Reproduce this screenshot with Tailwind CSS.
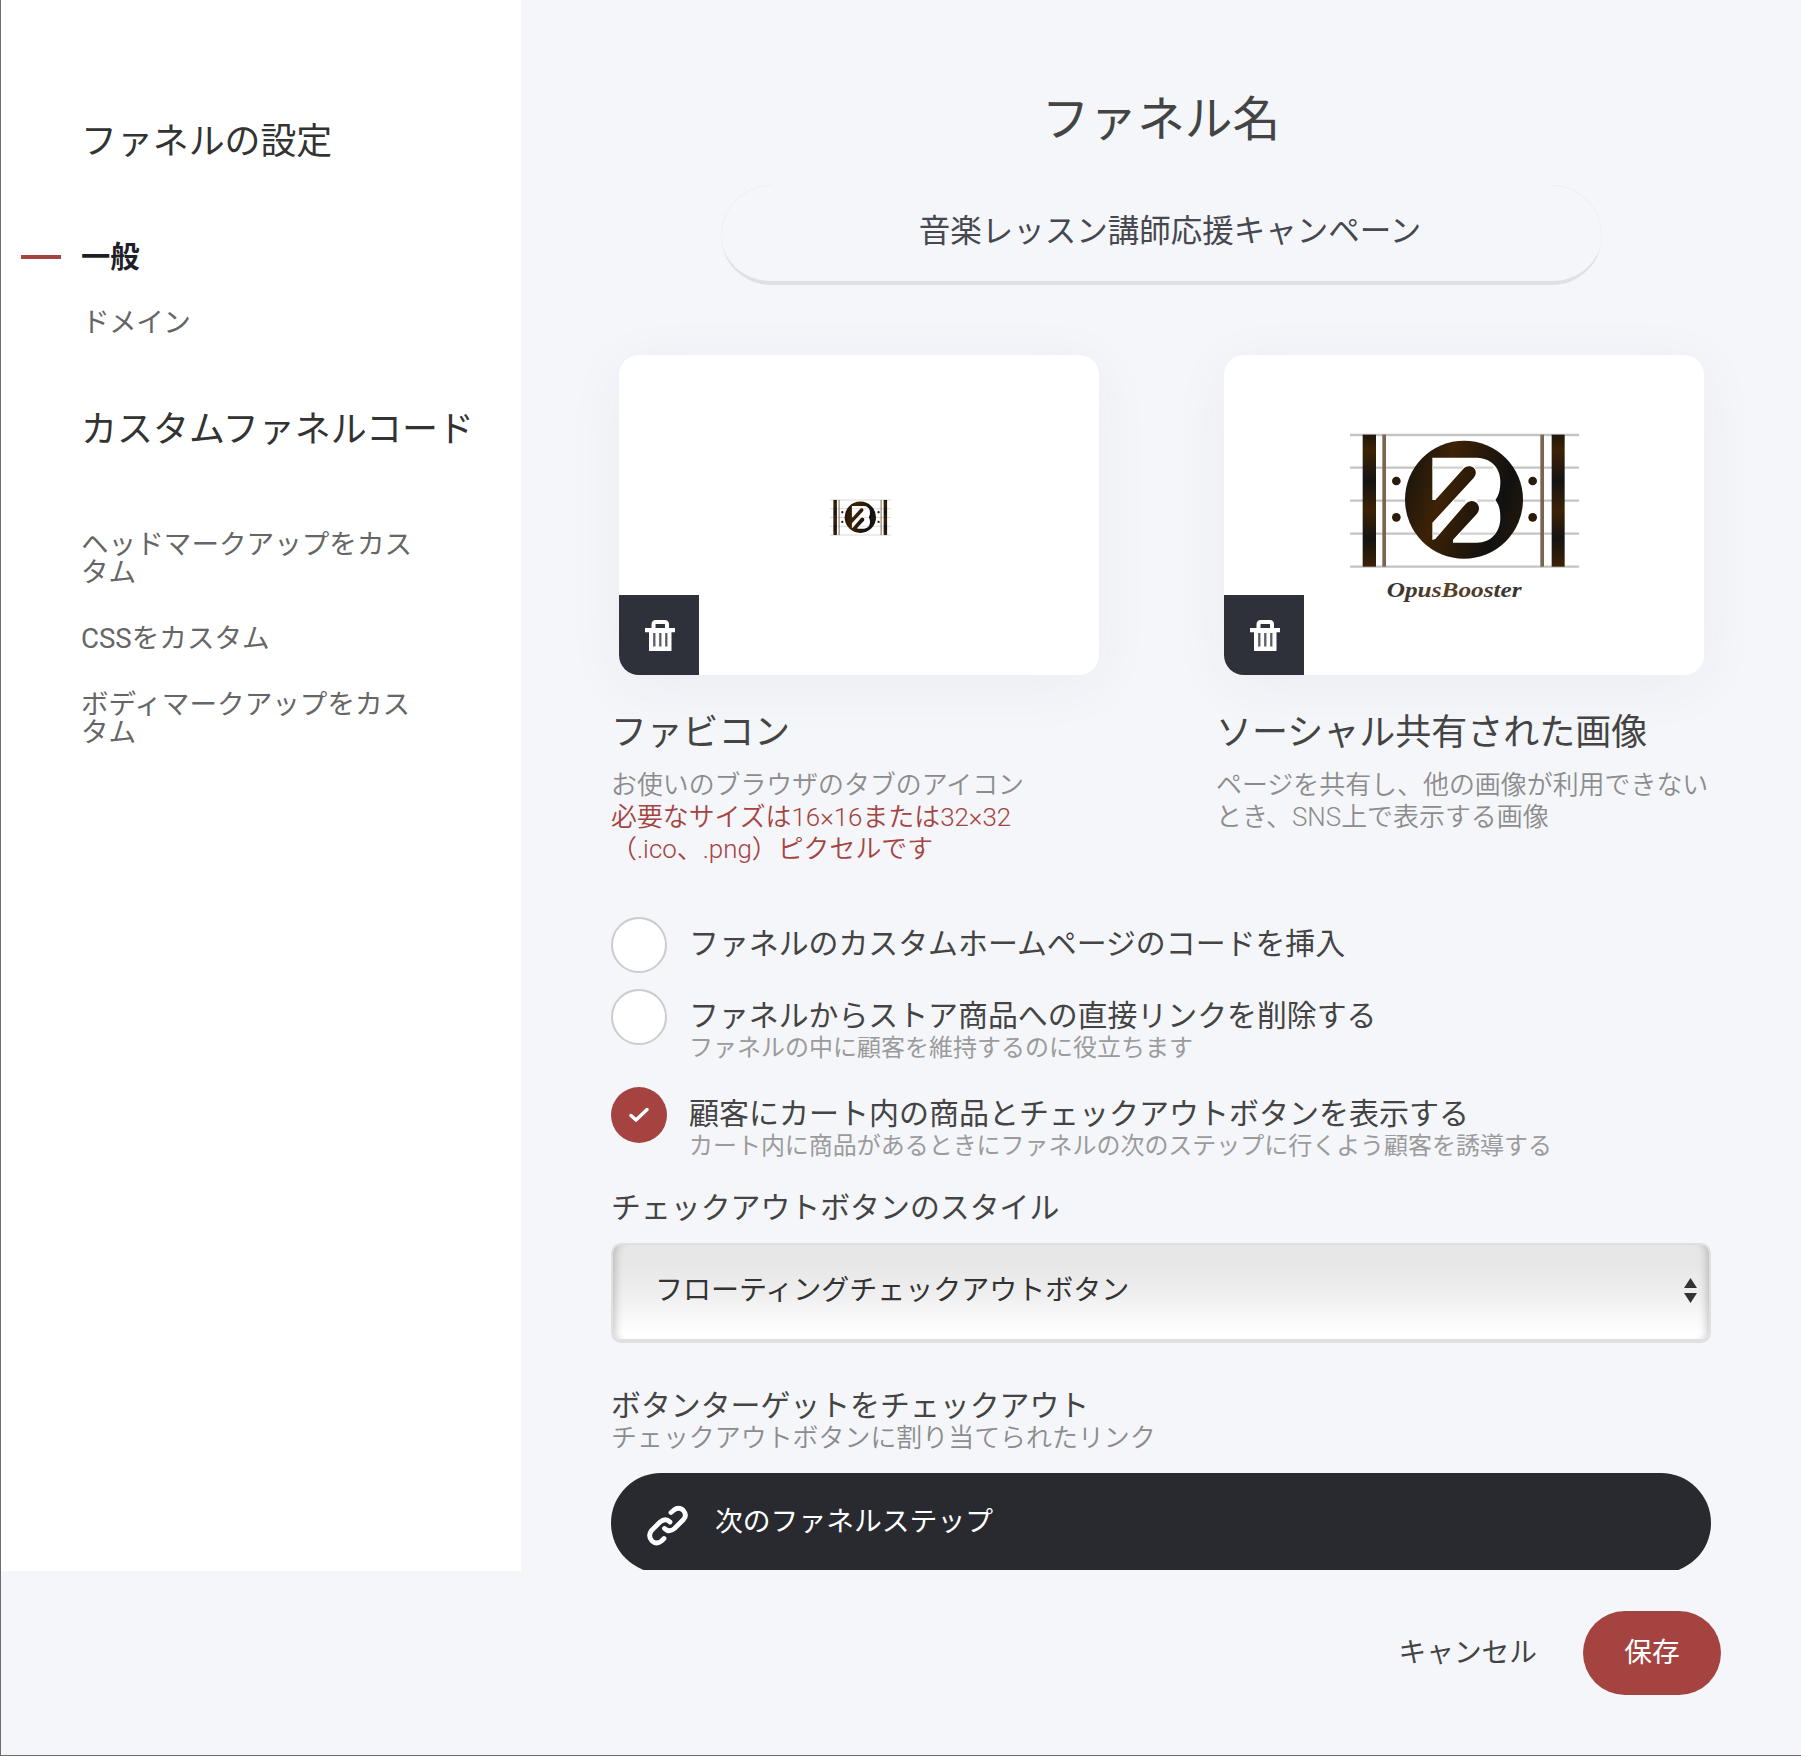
<!DOCTYPE html>
<html lang="ja">
<head>
<meta charset="utf-8">
<title>ファネルの設定</title>
<script src="https://cdn.jsdelivr.net/npm/@tailwindcss/browser@4"></script>
</head>
<body class="bg-[#f4f6fa]">
<svg class="absolute size-0" aria-hidden="true">
  <defs>
    <linearGradient id="bar" x1="0" y1="0" x2="0" y2="1">
      <stop offset="0" stop-color="#20170c"/><stop offset=".12" stop-color="#3d2205"/><stop offset=".35" stop-color="#141414"/><stop offset=".57" stop-color="#3d2205"/><stop offset=".79" stop-color="#141414"/><stop offset="1" stop-color="#3d2205"/>
    </linearGradient>
    <linearGradient id="disc" x1="0" y1=".35" x2="1" y2=".65">
      <stop offset="0" stop-color="#1c160e"/><stop offset=".3" stop-color="#3d2205"/><stop offset=".5" stop-color="#2c1b09"/><stop offset=".8" stop-color="#111"/><stop offset="1" stop-color="#20170c"/>
    </linearGradient>
    <linearGradient id="word" x1="0" y1="0" x2="1" y2="0">
      <stop offset="0" stop-color="#333"/><stop offset=".45" stop-color="#5a4024"/><stop offset="1" stop-color="#333"/>
    </linearGradient>
    <symbol id="emblem" viewBox="60 68 688 410">
      <path d="M60 76H748M60 174H748M60 273H748M60 372H748M60 471H748" stroke="#c4c4c4" stroke-width="7" fill="none"/>
      <g fill="url(#bar)">
        <rect x="98" y="75" width="40" height="396"/><rect x="665" y="75" width="39" height="396"/>
      </g>
      <g fill="#7b6450"><rect x="157" y="75" width="11" height="396"/><rect x="631" y="75" width="11" height="396"/></g>
      <g fill="#2b1b0b"><circle cx="199" cy="214" r="13"/><circle cx="199" cy="323" r="13"/><circle cx="608" cy="214" r="13"/><circle cx="608" cy="323" r="13"/></g>
      <circle cx="402" cy="270" r="177" fill="url(#disc)"/>
      <path d="M307 144H440C490 146 511 180 511 215C511 240 507 258 496 271C507 284 511 300 511 325C511 365 485 399 440 399H369V390L441 312C456 292 440 273 424 274C416 275 412 278 405 285L316 388L307 391V339L430 206C447 186 432 168 415 170C407 171 403 174 397 181L316 271H307Z" fill="#fff"/>
      <path d="M372 273H406M442 273H494M307 174H398M434 174H490M309 372H327M390 372H495" stroke="#d2d2d2" stroke-width="7"/>
    </symbol>
    <symbol id="trash" viewBox="0 0 30 31">
      <path d="M8.500 8V4.500Q8.500 2 11 2H19.500Q22 2 22 4.500V8" fill="none" stroke="#fff" stroke-width="4"/>
      <path d="M0 8H30V12.300H26.500V31H4V12.300H0Z" fill="#fff"/>
      <path d="M9.300 13V26.500M15.300 13V26.500M21.300 13V26.500" stroke="#5b5d65" stroke-width="2.300"/>
    </symbol>
  </defs>
</svg>
<div class="relative flex h-[1756px] w-[1801px] flex-col overflow-hidden border-b border-l border-b-[#6b6c70] border-l-[#6b6c70] bg-[#f4f6fa] font-[Roboto,'Noto_Sans_CJK_JP',sans-serif] whitespace-nowrap text-[#444]">
  <div class="flex h-[1571px]">
    <aside class="w-[520px] bg-white pt-[122px] pl-[80px] text-[27.600px] leading-[28px] text-[#666]">
      <h2 class="text-[35.900px] leading-[40px] text-[#333]">ファネルの設定</h2>
      <nav class="mt-[81px] flex flex-col">
        <a class="-ml-[60px] flex items-center gap-[20px] font-bold text-[#1f1f29]"><span class="h-1 w-10 bg-[#a54341]"></span><span class="text-[29.300px]">一般</span></a>
        <a class="mt-[38px] ml-px tracking-[-0.5px]">ドメイン</a>
      </nav>
      <h2 class="mt-[73px] text-[36px] leading-[40px] text-[#333]">カスタムファネルコード</h2>
      <nav class="mt-[81px] flex flex-col gap-[38px]">
        <a>ヘッドマークアップをカス<br>タム</a>
        <a>CSSをカスタム</a>
        <a>ボディマークアップをカス<br>タム</a>
      </nav>
    </aside>
    <main class="h-[1570px] w-[1280px] overflow-hidden px-[90px] pt-[90px]">
      <h1 class="text-center text-[47.700px] leading-[60px]">ファネル名</h1>
      <div class="relative mx-auto mt-[35px] flex h-[100px] w-[881px] items-center justify-center rounded-[50px] border-b-4 border-[#e0e0e0] pb-[2px] pl-[18px] text-[31.500px] text-[#47484f]">
        <span class="absolute top-0 left-0 size-[50px] rounded-tl-[50px] border-t border-l border-[#edeff2]"></span>
        <span class="absolute top-0 right-0 size-[50px] rounded-tr-[50px] border-t border-r border-[#edeff2]"></span>
        音楽レッスン講師応援キャンペーン
      </div>
      <section class="mt-[70px] flex">
        <div class="w-[605px] shrink-0">
          <div class="ml-2 flex h-[320px] w-[480px] items-end overflow-hidden rounded-[20px] bg-white shadow-[0_10px_60px_rgba(60,60,70,0.05)]">
            <button class="flex size-20 items-center justify-center bg-[#2f313a]"><svg class="h-[31px] w-[30px] translate-x-px"><use href="#trash"/></svg></button>
            <svg class="mb-[139px] ml-[131px] h-[37px] w-[61px]"><use href="#emblem"/></svg>
          </div>
          <h3 class="mt-[38px] text-[35.800px] leading-[40px]">ファビコン</h3>
          <p class="mt-[16px] h-24 text-[25.900px] leading-8 font-[350] text-[#8c8c8c]">お使いのブラウザのタブのアイコン<br><span class="text-[#a54341]">必要なサイズは16×16または32×32<br>（.ico、.png）ピクセルです</span></p>
        </div>
        <div class="w-[495px] shrink-0">
          <div class="ml-2 flex h-[320px] w-[480px] items-end overflow-hidden rounded-[20px] bg-white shadow-[0_10px_60px_rgba(60,60,70,0.05)]">
            <button class="flex size-20 items-center justify-center bg-[#2f313a]"><svg class="h-[31px] w-[30px] translate-x-px"><use href="#trash"/></svg></button>
            <svg class="mb-[59px] ml-[46px] h-[187px] w-[230px]" viewBox="60 58 690 561">
              <use href="#emblem" x="60" y="68" width="688" height="410"/>
              <text x="170" y="562" textLength="405" lengthAdjust="spacingAndGlyphs" font-family="'Liberation Serif',serif" font-style="italic" font-weight="bold" font-size="66" fill="url(#word)">OpusBooster</text>
            </svg>
          </div>
          <h3 class="mt-[38px] text-[36px] leading-[40px]">ソーシャル共有された画像</h3>
          <p class="mt-[16px] h-24 text-[25.950px] leading-8 font-[350] text-[#8c8c8c]">ページを共有し、他の画像が利用できない<br>とき、SNS上で表示する画像</p>
        </div>
      </section>
      <section class="mt-[52px] text-[29.900px] leading-8">
        <div class="flex h-[72px] gap-[22px]">
          <span class="size-14 rounded-full border-2 border-[#ccc] bg-white"></span>
          <p class="pt-[11px]">ファネルのカスタムホームページのコードを挿入</p>
        </div>
        <div class="flex h-[98px] gap-[22px]">
          <span class="size-14 rounded-full border-2 border-[#ccc] bg-white"></span>
          <div class="pt-[11px]"><p>ファネルからストア商品への直接リンクを削除する</p><p class="text-[24px] text-[#9b9b9b]">ファネルの中に顧客を維持するのに役立ちます</p></div>
        </div>
        <div class="flex h-[105px] gap-[22px]">
          <span class="flex size-14 items-center justify-center rounded-full bg-[#a54341]"><svg class="h-4 w-5" viewBox="0 0 20 16" fill="none" stroke="#fff" stroke-width="3.400" stroke-linecap="round" stroke-linejoin="round"><path d="M2 8.500 7 13 18 2.500"/></svg></span>
          <div class="pt-[11px]"><p class="text-[30px]">顧客にカート内の商品とチェックアウトボタンを表示する</p><p class="text-[23.970px] text-[#9b9b9b]">カート内に商品があるときにファネルの次のステップに行くよう顧客を誘導する</p></div>
        </div>
      </section>
      <section class="text-[29.900px] leading-8">
        <p>チェックアウトボタンのスタイル</p>
        <div class="mt-[19px] flex h-[100px] items-center justify-between rounded-[10px] border-2 border-b-4 border-[#e0e0e0] bg-linear-to-b from-[#e7e7e7] from-20% via-[#eee] via-50% to-white to-95% pr-[12px] pb-[3px] pl-[42px] text-[28px] text-[#333] shadow-[inset_10px_0_8px_-8px_rgba(0,0,0,0.22),inset_-10px_0_8px_-8px_rgba(0,0,0,0.22)]">フローティングチェックアウトボタン
          <svg class="h-[25px] w-[13px]" viewBox="0 0 13 25" fill="#333"><path d="M6.500 0 13 10H0ZM0 15H13L6.500 25Z"/></svg>
        </div>
        <p class="mt-[47px]">ボタンターゲットをチェックアウト</p>
        <p class="text-[25.950px] font-[350] text-[#8c8c8c]">チェックアウトボタンに割り当てられたリンク</p>
        <div class="mt-[19px] flex h-[100px] items-center rounded-full bg-[#292a2f] pl-9 text-[27.800px] text-white">
          <svg class="size-[41px] translate-y-[2px]" viewBox="0 0 41 41" fill="none" stroke="#fff" stroke-width="4.800" stroke-linecap="round"><path d="M24 7.500 27 5Q31.500 1.500 36 5Q40.500 10 36.500 14.500L27.500 23.500Q22 28 17.500 23.500"/><path d="M23 17Q18.500 12.500 13 17L4.500 25.500Q.5 31 5 36Q9.500 40 14.500 36L17 33.500"/></svg>
          <span class="-mt-[2px] ml-[27px]">次のファネルステップ</span>
        </div>
      </section>
    </main>
  </div>
  <footer class="flex items-center justify-end gap-[46px] pt-10 pr-[80px] text-[27.700px]">
    <button>キャンセル</button>
    <button class="h-[84px] w-[138px] rounded-[42px] bg-[#a54341] text-white">保存</button>
  </footer>
</div>
</body>
</html>
